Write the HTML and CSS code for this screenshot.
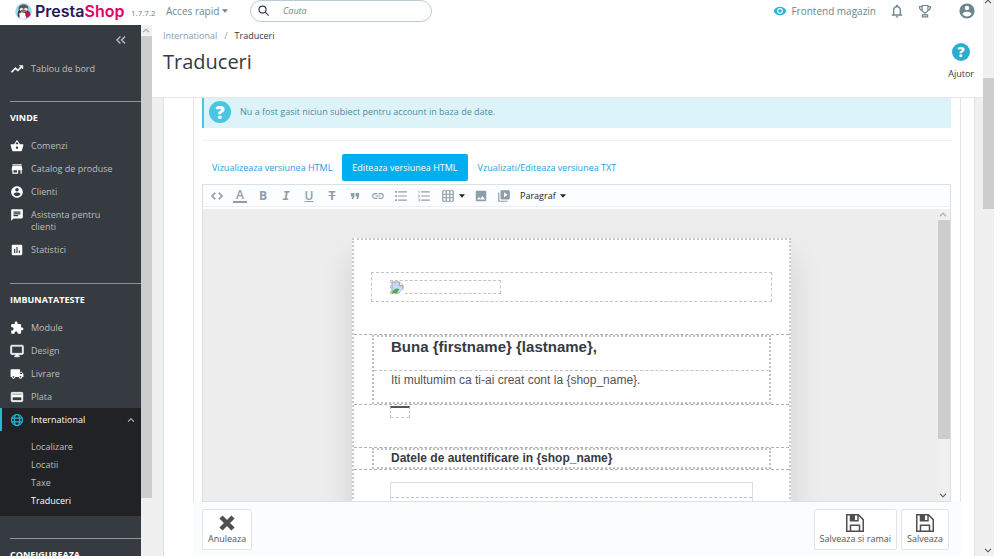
FILE: index.html
```html
<!DOCTYPE html>
<html lang="ro">
<head>
<meta charset="utf-8">
<title>Traduceri • PrestaShop</title>
<link rel="stylesheet" href="styles.css">
</head>
<body>
<svg class="sprite" aria-hidden="true">
  <symbol id="i-trend" viewBox="0 0 24 24"><path d="M16 6l2.29 2.29-4.88 4.88-4-4L2 16.59 3.41 18l6-6 4 4 6.3-6.29L22 12V6z" stroke="currentColor"/></symbol>
  <symbol id="i-basket" viewBox="0 0 24 24"><path d="M17.21 9l-4.38-6.56c-.19-.28-.51-.42-.83-.42-.32 0-.64.14-.83.43L6.79 9H2c-.55 0-1 .45-1 1 0 .09.01.18.04.27l2.54 9.27c.23.84 1 1.46 1.92 1.46h13c.92 0 1.69-.62 1.93-1.46l2.54-9.27L23 10c0-.55-.45-1-1-1h-4.79zM9 9l3-4.4L15 9H9zm3 8c-1.1 0-2-.9-2-2s.9-2 2-2 2 .9 2 2-.9 2-2 2z"/></symbol>
  <symbol id="i-store" viewBox="0 0 24 24"><path d="M20 4H4v2h16V4zm1 10v-2l-1-5H4l-1 5v2h1v6h10v-6h4v6h2v-6h1zm-9 4H6v-4h6v4z"/></symbol>
  <symbol id="i-account" viewBox="0 0 24 24"><path d="M12 2C6.48 2 2 6.48 2 12s4.48 10 10 10 10-4.48 10-10S17.52 2 12 2zm0 3c1.66 0 3 1.34 3 3s-1.34 3-3 3-3-1.34-3-3 1.34-3 3-3zm0 14.2c-2.5 0-4.71-1.28-6-3.22.03-1.99 4-3.08 6-3.08 1.99 0 5.97 1.09 6 3.08-1.29 1.94-3.5 3.22-6 3.22z"/></symbol>
  <symbol id="i-chat" viewBox="0 0 24 24"><path d="M20 2H4c-1.1 0-1.99.9-1.99 2L2 22l4-4h14c1.1 0 2-.9 2-2V4c0-1.1-.9-2-2-2zM6 9h12v2H6V9zm8 5H6v-2h8v2zm4-6H6V6h12v2z"/></symbol>
  <symbol id="i-stats" viewBox="0 0 24 24"><path d="M19 3H5c-1.1 0-2 .9-2 2v14c0 1.1.9 2 2 2h14c1.1 0 2-.9 2-2V5c0-1.1-.9-2-2-2zM9 17H7v-7h2v7zm4 0h-2V7h2v10zm4 0h-2v-4h2v4z"/></symbol>
  <symbol id="i-puzzle" viewBox="0 0 24 24"><path d="M20.5 11H19V7c0-1.1-.9-2-2-2h-4V3.5C13 2.12 11.88 1 10.5 1S8 2.12 8 3.5V5H4c-1.1 0-1.99.9-1.99 2v3.8H3.5c1.49 0 2.7 1.21 2.7 2.7s-1.21 2.7-2.7 2.7H2V20c0 1.1.9 2 2 2h3.8v-1.5c0-1.49 1.21-2.7 2.7-2.7 1.49 0 2.7 1.21 2.7 2.7V22H17c1.1 0 2-.9 2-2v-4h1.5c1.38 0 2.5-1.12 2.5-2.5S21.88 11 20.5 11z"/></symbol>
  <symbol id="i-desktop" viewBox="0 0 24 24"><path d="M21 2H3c-1.1 0-2 .9-2 2v12c0 1.1.9 2 2 2h7v2H8v2h8v-2h-2v-2h7c1.1 0 2-.9 2-2V4c0-1.1-.9-2-2-2zm0 14H3V4h18v12z" stroke="currentColor"/></symbol>
  <symbol id="i-truck" viewBox="0 0 24 24"><path d="M20 8h-3V4H3c-1.1 0-2 .9-2 2v11h2c0 1.66 1.34 3 3 3s3-1.34 3-3h6c0 1.66 1.34 3 3 3s3-1.34 3-3h2v-5l-3-4zM6 18.5c-.83 0-1.5-.67-1.5-1.5s.67-1.5 1.5-1.5 1.5.67 1.5 1.5-.67 1.5-1.5 1.5zm13.5-9l1.96 2.5H17V9.5h2.5zm-1.5 9c-.83 0-1.5-.67-1.5-1.5s.67-1.5 1.5-1.5 1.5.67 1.5 1.5-.67 1.5-1.5 1.5z"/></symbol>
  <symbol id="i-card" viewBox="0 0 24 24"><path d="M20 4H4c-1.11 0-1.99.89-1.99 2L2 18c0 1.11.89 2 2 2h16c1.11 0 2-.89 2-2V6c0-1.11-.89-2-2-2zm0 14H4v-6h16v6zm0-10H4V6h16v2z" stroke="currentColor"/></symbol>
  <symbol id="i-globe" viewBox="0 0 24 24"><g fill="none" stroke="currentColor" stroke-width="2"><circle cx="12" cy="12" r="9.5"/><ellipse cx="12" cy="12" rx="4.5" ry="9.5"/><path d="M3 8.7h18M3 15.3h18"/></g></symbol>
  <symbol id="i-up" viewBox="0 0 24 24"><path d="M5 16l7-7 7 7" fill="none" stroke="currentColor" stroke-width="2.5"/></symbol>
  <symbol id="i-collapse" viewBox="0 0 24 24"><path d="M11 6l-6 6 6 6M19 6l-6 6 6 6" fill="none" stroke="currentColor" stroke-width="2.4"/></symbol>
  <symbol id="i-caret" viewBox="0 0 10 6"><path d="M0 0h10L5 6z"/></symbol>
  <symbol id="i-search" viewBox="0 0 24 24"><g fill="none" stroke="currentColor" stroke-width="2"><circle cx="9.5" cy="9.5" r="6"/><path d="M14 14l6 6"/></g></symbol>
  <symbol id="i-eye" viewBox="0 0 24 24"><path d="M12 4.5C7 4.500 2.730 7.610 1 12c1.730 4.390 6 7.500 11 7.500s9.270-3.110 11-7.500c-1.730-4.390-6-7.500-11-7.500zM12 17c-2.760 0-5-2.240-5-5s2.240-5 5-5 5 2.240 5 5-2.240 5-5 5zm0-8c-1.660 0-3 1.340-3 3s1.340 3 3 3 3-1.340 3-3-1.340-3-3-3z"/></symbol>
  <symbol id="i-bell" viewBox="0 0 24 24"><path d="M12 22c1.100 0 2-.9 2-2h-4c0 1.100.9 2 2 2zm6-6v-5c0-3.070-1.630-5.640-4.500-6.320V4c0-.83-.67-1.500-1.500-1.500s-1.500.67-1.500 1.500v.68C7.640 5.360 6 7.920 6 11v5l-2 2v1h16v-1l-2-2zm-2 1H8v-6c0-2.480 1.510-4.500 4-4.500s4 2.020 4 4.500v6z"/></symbol>
  <symbol id="i-trophy" viewBox="0 0 24 24"><g fill="none" stroke="currentColor" stroke-width="2"><path d="M7 2.500h10V9c0 3.500-2 5.500-5 5.500S7 12.500 7 9zM7 4.500H2.500C2.500 8 4.500 10.500 8 11M17 4.500h4.500c0 3.500-2 6-5.500 6.500M12 14.500V18M7.500 22v-3.500h9V22z"/></g></symbol>
  <symbol id="i-code" viewBox="0 0 24 24"><path d="M9.400 16.600L4.800 12l4.600-4.600L8 6l-6 6 6 6 1.400-1.400zm5.200 0l4.600-4.600-4.600-4.600L16 6l6 6-6 6-1.400-1.400z" stroke="currentColor"/></symbol>
  <symbol id="i-quote" viewBox="0 0 24 24"><path d="M6 17h3l2-4V7H5v6h3zm8 0h3l2-4V7h-6v6h3z"/></symbol>
  <symbol id="i-link" viewBox="0 0 24 24"><path d="M3.900 12c0-1.710 1.390-3.100 3.100-3.100h4V7H7c-2.760 0-5 2.240-5 5s2.240 5 5 5h4v-1.900H7c-1.710 0-3.100-1.390-3.100-3.100zM8 13h8v-2H8v2zm9-6h-4v1.900h4c1.710 0 3.100 1.390 3.100 3.100s-1.390 3.100-3.100 3.100h-4V17h4c2.760 0 5-2.240 5-5s-2.240-5-5-5z"/></symbol>
  <symbol id="i-ul" viewBox="0 0 24 24"><path d="M7 4h15v2H7zm0 7h15v2H7zm0 7h15v2H7zM2 3.500h3v3H2zm0 7h3v3H2zm0 7h3v3H2z"/></symbol>
  <symbol id="i-ol" viewBox="0 0 24 24"><path d="M7 4h15v2H7zm0 7h15v2H7zm0 7h15v2H7z"/><path d="M2 3.500h1.500V7M2 10h2.500L2 13.500h3M2 17h2.500v3.500H2M3 18.700h1.500" fill="none" stroke="currentColor"/></symbol>
  <symbol id="i-grid" viewBox="0 0 24 24"><path d="M20 2H4c-1.100 0-2 .9-2 2v16c0 1.100.9 2 2 2h16c1.100 0 2-.9 2-2V4c0-1.100-.9-2-2-2zM8 20H4v-4h4v4zm0-6H4v-4h4v4zm0-6H4V4h4v4zm6 12h-4v-4h4v4zm0-6h-4v-4h4v4zm0-6h-4V4h4v4zm6 12h-4v-4h4v4zm0-6h-4v-4h4v4zm0-6h-4V4h4v4z"/></symbol>
  <symbol id="i-image" viewBox="0 0 24 24"><path d="M21 19V5c0-1.100-.9-2-2-2H5c-1.100 0-2 .9-2 2v14c0 1.100.9 2 2 2h14c1.100 0 2-.9 2-2zM8.500 13.500l2.500 3.010L14.500 12l4.500 6H5l3.500-4.500z"/></symbol>
  <symbol id="i-video" viewBox="0 0 24 24"><path d="M4 6H2v14c0 1.100.9 2 2 2h14v-2H4V6zm16-4H8c-1.100 0-2 .9-2 2v12c0 1.100.9 2 2 2h12c1.100 0 2-.9 2-2V4c0-1.100-.9-2-2-2zm-8 12.500v-9l6 4.500-6 4.500z"/></symbol>
  <symbol id="i-cross" viewBox="0 0 24 24"><path d="M4 4l16 16M20 4L4 20" fill="none" stroke="currentColor" stroke-width="6"/></symbol>
  <symbol id="i-save" viewBox="0 0 24 24"><g fill="none" stroke="currentColor" stroke-width="2"><path d="M1 1h15.500L23 7.500V23H1z"/><path d="M6 23v-8h12v8M6 1v8h10V1"/></g><path d="M6 1h6v7.500H6z"/></symbol>
</svg>

<div class="app">
  <div class="main">
    <header class="topbar">
      <a class="brand" href="#">
        <svg class="brand-mark" viewBox="0 0 36 36"><circle cx="18" cy="18" r="17.500" fill="#9bd9ea"/><path d="M6 28c-1-6 0-12 4-15l15-3c4 4 5 12 3 18-6 7-16 7-22 0z" fill="#3b3b45"/><path d="M7 14C7 6 12 3 18 3s12 4 10 11l-9 4z" fill="#5a565c"/><ellipse cx="14" cy="14" rx="4" ry="4" fill="#e8e4e2"/><ellipse cx="23" cy="14" rx="4" ry="4" fill="#e8e4e2"/><path d="M9 22c5-3 9-3 13 0l2 9c-4 4-10 4-14 0z" fill="#fff"/><path d="M11 16l7-3 8 4-7 4z" fill="#8f6f5c"/><path d="M23 21l8-3 2 8-7 5-4-4z" fill="#df0067"/></svg>
        <span class="brand-name">Presta<span class="brand-accent">Shop</span></span>
      </a>
      <span class="version">1.7.7.2</span>
      <button class="quick" type="button">Acces rapid <svg class="caret"><use href="#i-caret"/></svg></button>
      <label class="search"><svg class="ic14"><use href="#i-search"/></svg><input type="text" placeholder="Cauta" aria-label="Cauta"></label>
      <nav class="top-links">
        <a class="shop-link" href="#"><svg class="ic14 cyan"><use href="#i-eye"/></svg>Frontend magazin</a>
        <button type="button" aria-label="Notificari"><svg class="ic16"><use href="#i-bell"/></svg></button>
        <button type="button" aria-label="Trofee"><svg class="ic14"><use href="#i-trophy"/></svg></button>
        <button class="profile" type="button" aria-label="Cont"><svg class="ic18"><use href="#i-account"/></svg></button>
      </nav>
    </header>

    <div class="columns">
      <aside class="sidebar">
        <button class="collapse" type="button" aria-label="Restrange"><svg class="ic14"><use href="#i-collapse"/></svg></button>
        <a class="item home" href="#"><svg class="ic14"><use href="#i-trend"/></svg>Tablou de bord</a>
        <section class="group">
          <h2>VINDE</h2>
          <a class="item" href="#"><svg class="ic14"><use href="#i-basket"/></svg>Comenzi</a>
          <a class="item" href="#"><svg class="ic14"><use href="#i-store"/></svg>Catalog de produse</a>
          <a class="item" href="#"><svg class="ic14"><use href="#i-account"/></svg>Clienti</a>
          <a class="item" href="#"><svg class="ic14"><use href="#i-chat"/></svg><span class="wrap">Asistenta pentru clienti</span></a>
          <a class="item" href="#"><svg class="ic14"><use href="#i-stats"/></svg>Statistici</a>
        </section>
        <section class="group">
          <h2>IMBUNATATESTE</h2>
          <a class="item" href="#"><svg class="ic14"><use href="#i-puzzle"/></svg>Module</a>
          <a class="item" href="#"><svg class="ic14"><use href="#i-desktop"/></svg>Design</a>
          <a class="item" href="#"><svg class="ic14"><use href="#i-truck"/></svg>Livrare</a>
          <a class="item" href="#"><svg class="ic14"><use href="#i-card"/></svg>Plata</a>
          <div class="open">
            <a class="item current" href="#"><svg class="ic14 cyan"><use href="#i-globe"/></svg>International<svg class="ic10 chev"><use href="#i-up"/></svg></a>
            <div class="sub">
              <a href="#">Localizare</a>
              <a href="#">Locatii</a>
              <a href="#">Taxe</a>
              <a class="on" href="#">Traduceri</a>
            </div>
          </div>
        </section>
        <section class="group">
          <h2>CONFIGUREAZA</h2>
        </section>
      </aside>
      <div class="scroll side-scroll"><svg class="arrow light"><use href="#i-up"/></svg><div class="thumb"></div></div>

      <main class="content">
        <div class="page-head">
          <div>
            <nav class="crumbs"><a href="#">International</a><span>/</span><a class="here" href="#">Traduceri</a></nav>
            <h1>Traduceri</h1>
          </div>
          <a class="help" href="#"><span class="help-dot">?</span>Ajutor</a>
        </div>
        <div class="canvas">
          <div class="panel">
            <div class="inner">
              <div class="alert"><span class="alert-dot">?</span><p>Nu a fost gasit niciun subiect pentru account in baza de date.</p></div>
              <div class="tabs">
                <button type="button">Vizualizeaza versiunea HTML</button>
                <button class="active" type="button">Editeaza versiunea HTML</button>
                <button type="button">Vzualizati/Editeaza versiunea TXT</button>
              </div>
              <div class="editor">
                <div class="toolbar">
                  <button type="button" aria-label="Cod sursa"><svg class="ic14"><use href="#i-code"/></svg></button>
                  <button type="button" class="g color">A</button>
                  <button type="button" class="g bold">B</button>
                  <button type="button" class="g italic">I</button>
                  <button type="button" class="g under">U</button>
                  <button type="button" class="g strike">T</button>
                  <button type="button" aria-label="Citat"><svg class="ic14"><use href="#i-quote"/></svg></button>
                  <button type="button" aria-label="Link"><svg class="ic14"><use href="#i-link"/></svg></button>
                  <button type="button" aria-label="Lista"><svg class="ic14"><use href="#i-ul"/></svg></button>
                  <button type="button" aria-label="Lista numerotata"><svg class="ic14"><use href="#i-ol"/></svg></button>
                  <button type="button" class="menu" aria-label="Tabel"><svg class="ic14"><use href="#i-grid"/></svg><svg class="caret"><use href="#i-caret"/></svg></button>
                  <button type="button" aria-label="Imagine"><svg class="ic14"><use href="#i-image"/></svg></button>
                  <button type="button" aria-label="Video"><svg class="ic14"><use href="#i-video"/></svg></button>
                  <button type="button" class="format">Paragraf <svg class="caret"><use href="#i-caret"/></svg></button>
                </div>
                <div class="frame">
                  <div class="mail-area">
                    <article class="mail">
                      <div class="cell logo-row"><div class="dash logo-box"><div class="dash missing"><svg class="broken" viewBox="0 0 14 14"><path d="M1 1h8l4 4v8H1z" fill="#c7d9f5" stroke="#999"/><path d="M1 13c2-5 6-6 8-4l-3 4z" fill="#4cae3c"/><path d="M9 1v4h4" fill="#fff" stroke="#999"/><path d="M14 8l-6 6h6z" fill="#fff"/></svg></div></div></div>
                      <div class="cell"><div class="block"><h3>Buna {firstname} {lastname},</h3><p>Iti multumim ca ti-ai creat cont la {shop_name}.</p></div></div>
                      <div class="cell rule-row"><div class="dash rule"></div></div>
                      <div class="cell"><div class="block"><h4>Datele de autentificare in {shop_name}</h4></div></div>
                      <div class="cell last"><div class="box"><div class="box-line"></div></div></div>
                    </article>
                  </div>
                  <div class="scroll frame-scroll"><svg class="arrow light"><use href="#i-up"/></svg><div class="thumb"></div><svg class="arrow down"><use href="#i-up"/></svg></div>
                </div>
              </div>
            </div>
            <footer class="actions">
              <button type="button"><svg class="ic18"><use href="#i-cross"/></svg>Anuleaza</button>
              <button class="push" type="button"><svg class="ic18"><use href="#i-save"/></svg>Salveaza si ramai</button>
              <button type="button"><svg class="ic18"><use href="#i-save"/></svg>Salveaza</button>
            </footer>
          </div>
        </div>
      </main>
    </div>
  </div>
  <div class="scroll page-scroll"><svg class="arrow"><use href="#i-up"/></svg><div class="thumb"></div><svg class="arrow down"><use href="#i-up"/></svg></div>
</div>
</body>
</html>
```
FILE: styles.css
```css
* { box-sizing: border-box; }
body {
  margin: 0;
  padding: 0 6px 3px 0;
  height: 100vh;
  overflow: hidden;
  background: #fff;
  font: 9px/12px "Open Sans", "Noto Sans", sans-serif;
  color: #363a41;
}
h1, h2, h3, h4, p { margin: 0; }
a { color: inherit; text-decoration: none; }
button { border: 0; padding: 0; background: none; font: inherit; color: inherit; }
svg { fill: currentColor; flex: none; }
.sprite { display: none; }
.ic10 { width: 10px; height: 10px; }
.ic14 { width: 14px; height: 14px; }
.ic16 { width: 16px; height: 16px; }
.ic18 { width: 18px; height: 18px; }
.cyan { color: #25b9d7; }
.caret { width: 6px; height: 4px; }

.app { display: flex; height: 100%; }
.main { flex: 1; min-width: 0; display: flex; flex-direction: column; }

/* Top bar */
.topbar { display: flex; align-items: center; height: 25px; padding: 0 7px 3px 15px; color: #6c868e; font-size: 10px; }
.brand { display: flex; align-items: center; gap: 3px; width: 116px; }
.brand-mark { width: 17px; height: 17px; }
.brand-name { font: 600 16px/20px Inter, sans-serif; color: #251b5b; }
.brand-accent { color: #df0067; }
.version { width: 35px; font-size: 8px; padding-top: 4px; }
.quick { display: flex; align-items: center; gap: 3px; width: 84px; }
.search { display: flex; align-items: center; gap: 12px; width: 182px; height: 22px; padding: 0 6px; border: 1px solid #bbcdd2; border-radius: 11px; color: #363a41; }
.search input { min-width: 0; flex: 1; border: 0; padding: 0; outline: 0; background: none; font: italic 9px/12px "Open Sans", sans-serif; }
.search input::placeholder { color: #6c868e; opacity: 1; }
.top-links { display: flex; align-items: center; gap: 13px; margin-left: auto; }
.top-links button { display: flex; }
.shop-link { display: flex; align-items: center; gap: 4px; }
.shop-link .cyan { color: #25b9d7; }
.profile { margin-left: 13px; }

/* Sidebar */
.columns { flex: 1; min-height: 0; display: flex; }
.sidebar { width: 141px; flex: none; overflow: hidden; background: #363a41; color: #bebebe; }
.collapse { display: flex; margin: 8px 13px 14px auto; }
.item { display: flex; align-items: flex-start; gap: 7px; padding: 6px 5px 5px 10px; }
.item .ic14 { color: #fff; margin: -1px 0; }
.item .cyan { color: #25b9d7; }
.wrap { width: 80px; }
.home { margin-bottom: 21px; padding-top: 2px; }
.group { margin-bottom: 22px; }
.group h2 { margin: 0 0 10px 10px; padding-top: 10px; border-top: 1px solid #8d959b; font-size: 9px; line-height: 12px; color: #fff; }
.open { background: #202226; padding-bottom: 6px; }
.current { padding-left: 8px; border-left: 2px solid #25b9d7; color: #fff; }
.chev { margin: 1px 0 0 auto; color: #bebebe; }
.sub { display: flex; flex-direction: column; padding: 7px 0 0 31px; line-height: 18px; }
.on { color: #fff; }

/* Scroll bars */
.scroll { display: flex; flex-direction: column; width: 11px; flex: none; background: #f0f0f0; }
.arrow { width: 10px; height: 11px; color: #505050; }
.light { color: #a0a0a0; }
.down { transform: rotate(180deg); margin-top: auto; }
.thumb { background: #cdcdcd; }
.side-scroll .thumb { height: 87%; }
.page-scroll .arrow:first-child { margin: -4px 0 71px; }
.page-scroll .thumb { height: 131px; }
.frame-scroll { width: 12px; }
.frame-scroll .thumb { height: 75%; }

/* Page header */
.content { flex: 1; min-width: 0; display: flex; flex-direction: column; }
.page-head { display: flex; justify-content: space-between; height: 73px; padding: 5px 9px 0 11px; border-bottom: 1px solid #e4e6e8; }
.crumbs { display: flex; gap: 7px; color: #8a9ba1; }
.here { color: #363a41; }
h1 { margin-top: 6px; font-size: 20px; line-height: 28px; font-weight: 400; }
.help { display: flex; flex-direction: column; align-items: center; gap: 7px; padding-top: 13px; }
.help-dot { width: 18px; border-radius: 50%; background: #2eacce; color: #fff; font: 800 14px/18px "Open Sans", sans-serif; text-align: center; }

/* Panels */
.canvas { flex: 1; min-height: 0; padding: 0 8px 0 11px; background: #eef0f2; }
.panel { display: flex; flex-direction: column; height: 100%; padding: 0 13px 0 29px; background: #fff; border: solid #dde3e6; border-width: 0 1px; }
.inner { flex: 1; min-height: 0; display: flex; flex-direction: column; padding: 0 9px 0 8px; border: solid #e0e5e8; border-width: 0 1px; }
.alert { display: flex; align-items: center; gap: 9px; height: 30px; padding: 0 5px 3px; border-left: 2px solid #4ac7e0; background: #dcf3f9; color: #4a8fa3; }
.alert-dot { width: 22px; border-radius: 50%; background: #4ac7e0; color: #fff; font: 800 18px/22px "Open Sans", sans-serif; text-align: center; }
.tabs { display: flex; margin-top: 12px; padding: 13px 0 3px; border-top: 1px solid #f0f1f2; color: #25a0e4; }
.tabs button { padding: 0 10px; line-height: 27px; }
.tabs .active { border-radius: 2px; background: #00aff0; color: #fff; }

/* Editor */
.editor { flex: 1; min-height: 0; display: flex; flex-direction: column; border: 1px solid #d5e3e8; }
.toolbar { display: flex; align-items: center; gap: 9px; height: 22px; padding: 0 7px; border-bottom: 1px solid #e8eff2; background: #fbfdff; color: #8e9ea6; }
.toolbar button { display: flex; align-items: center; justify-content: center; width: 14px; }
.toolbar .g { font: 700 12px/12px "Open Sans", sans-serif; }
.toolbar .color { font-weight: 600; border-bottom: 2px solid #8e9ea6; }
.toolbar .italic { font-family: "DejaVu Sans Mono", monospace; font-style: italic; }
.toolbar .under { font-weight: 600; text-decoration: underline; }
.toolbar .strike { text-decoration: line-through; }
.toolbar .menu { width: 25px; gap: 4px; }
.menu .caret, .format .caret { color: #222; }
.toolbar .format { width: auto; gap: 4px; color: #222; }
.frame { flex: 1; min-height: 0; display: flex; margin-top: 2px; background: #ededed; }
.mail-area { flex: 1; min-width: 0; overflow: hidden; padding: 29px 147px 0 149px; }
.mail { height: 320px; background: #fff; border: 2px dotted #c8c8c8; box-shadow: 0 20px 30px rgba(0, 0, 0, .13); font-family: "Liberation Sans", Arial, sans-serif; }
.cell { padding: 0 18px; border-bottom: 1px dashed #b0b0b0; }
.dash { border: 1px dashed #c4c4c4; }
.logo-row { padding: 32px 17px; }
.logo-box { padding: 7px 18px; }
.missing { width: 111px; height: 14px; }
.broken { display: block; width: 13px; height: 13px; }
.block { border: 2px dotted #c0c0c0; }
.block h3 { padding: 0 17px 14px; font-size: 15px; line-height: 19px; border-bottom: 1px dashed #c4c4c4; }
.block p { padding: 1px 17px 14px; font-size: 12px; line-height: 16px; color: #555; }
.block h4 { padding: 0 17px; font-size: 12px; line-height: 17px; }
.rule-row { padding: 1px 36px 29px; }
.rule { width: 20px; height: 12px; border-top: 2px solid #555; }
.last { padding: 12px 36px; border: 0; }
.box { height: 60px; border: 1px solid #ddd; padding-top: 14px; }
.box-line { border-top: 1px dashed #c4c4c4; }

/* Footer actions */
.actions { display: flex; gap: 4px; height: 54px; flex: none; padding: 7px 12px 6px 9px; background: #fafcfe; color: #555; }
.actions button { display: flex; flex-direction: column; align-items: center; justify-content: center; gap: 1px; padding: 0 5px; border: 1px solid #e2e6e9; border-radius: 2px; background: #fff; }
.actions svg { color: #4f4f4f; }
.actions .push { margin-left: auto; }
```
